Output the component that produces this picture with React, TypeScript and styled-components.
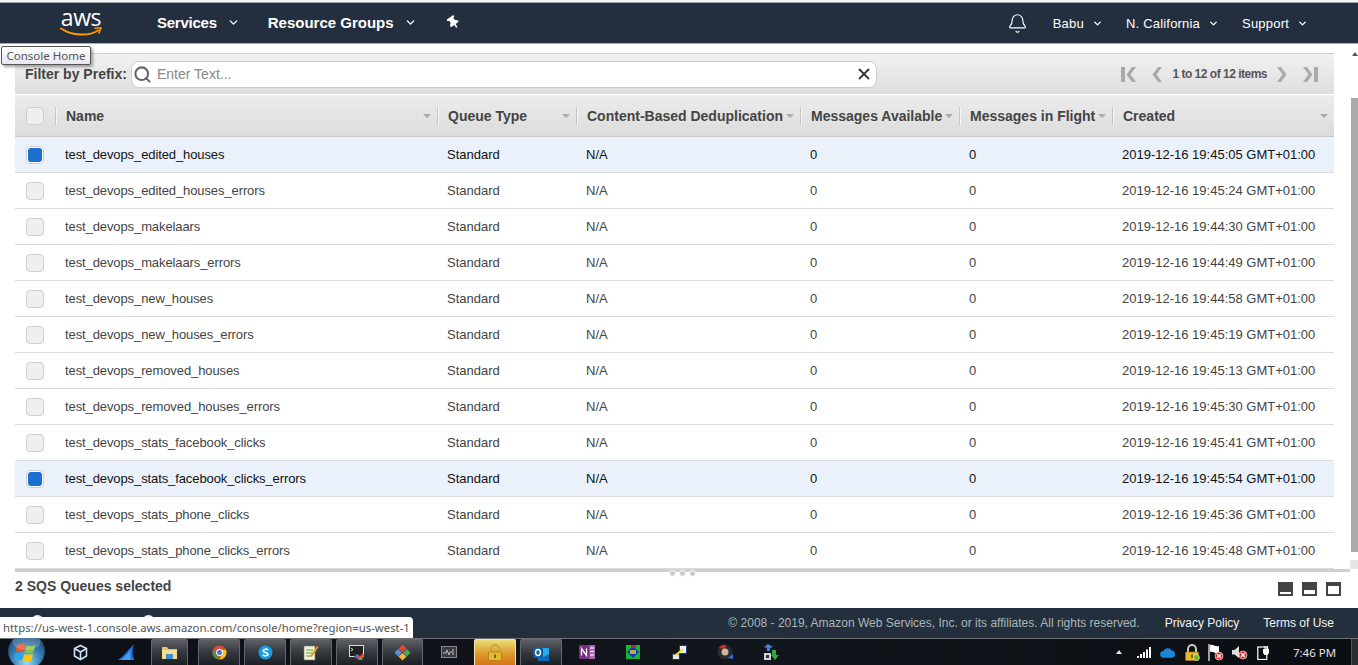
import * as React from 'react';
import styled, { createGlobalStyle } from 'styled-components';
import { Bell, ChevronDown, Search, X } from 'lucide-react';
import { FaThumbtack } from 'react-icons/fa';

const columns = '40px 382px 139px 224px 159px 153px 222px';

const queues = [
  { name: 'test_devops_edited_houses', created: '2019-12-16 19:45:05 GMT+01:00', selected: true },
  { name: 'test_devops_edited_houses_errors', created: '2019-12-16 19:45:24 GMT+01:00' },
  { name: 'test_devops_makelaars', created: '2019-12-16 19:44:30 GMT+01:00' },
  { name: 'test_devops_makelaars_errors', created: '2019-12-16 19:44:49 GMT+01:00' },
  { name: 'test_devops_new_houses', created: '2019-12-16 19:44:58 GMT+01:00' },
  { name: 'test_devops_new_houses_errors', created: '2019-12-16 19:45:19 GMT+01:00' },
  { name: 'test_devops_removed_houses', created: '2019-12-16 19:45:13 GMT+01:00' },
  { name: 'test_devops_removed_houses_errors', created: '2019-12-16 19:45:30 GMT+01:00' },
  { name: 'test_devops_stats_facebook_clicks', created: '2019-12-16 19:45:41 GMT+01:00' },
  { name: 'test_devops_stats_facebook_clicks_errors', created: '2019-12-16 19:45:54 GMT+01:00', selected: true },
  { name: 'test_devops_stats_phone_clicks', created: '2019-12-16 19:45:36 GMT+01:00' },
  { name: 'test_devops_stats_phone_clicks_errors', created: '2019-12-16 19:45:48 GMT+01:00' },
];

const headers = ['Name', 'Queue Type', 'Content-Based Deduplication', 'Messages Available', 'Messages in Flight', 'Created'];

const Global = createGlobalStyle`
  html, body {
    margin: 0;
    padding: 0;
    background: #fff;
    overflow: hidden;
    font-family: "Liberation Sans", Arial, sans-serif;
  }
`;

const Page = styled.div`
  width: 1358px;
  height: 665px;
  position: relative;
  overflow: hidden;
  display: flex;
  flex-direction: column;
`;

const TopEdge = styled.div`
  height: 2px;
  border-bottom: 1px solid #9aa0a6;
  background: #f4f4f4;
`;

const Nav = styled.div`
  height: 40px;
  flex: none;
  background: #232f3e;
  border-bottom: 1px solid #a8adb3;
  display: flex;
  align-items: center;
  color: #fff;
`;

const Logo = styled.div`
  width: 42px;
  margin-left: 60px;
  margin-right: 55px;
  display: flex;
  flex-direction: column;
  align-items: center;
  margin-top: -3px;
`;

const LogoText = styled.span`
  font-family: "Open Sans", sans-serif;
  font-size: 23px;
  line-height: 19px;
  letter-spacing: -0.4px;
  height: 19px;
`;

const MainItem = styled.span<{ $gap: number; $track?: number }>`
  font-size: 15px;
  font-weight: 700;
  display: flex;
  align-items: center;
  gap: 10px;
  margin-top: -2px;
  letter-spacing: ${p => p.$track || 0}px;
  margin-right: ${p => p.$gap}px;
`;

const UserItem = styled.span<{ $gap: number }>`
  font-size: 13px;
  letter-spacing: 0.2px;
  display: flex;
  align-items: center;
  gap: 8px;
  margin-right: ${p => p.$gap}px;
`;

const Spacer = styled.div`
  flex: 1;
`;

const BellWrap = styled.span`
  display: flex;
  margin-right: 25px;
`;

const PinWrap = styled.span`
  display: flex;
  margin-top: -2px;
  transform: rotate(-35deg);
`;

const Body = styled.div`
  flex: 1;
  display: flex;
  min-height: 0;
`;

const Content = styled.div`
  width: 1335px;
  margin-left: 15px;
  padding-top: 9px;
`;

const Panel = styled.div`
  width: 1319px;
`;

const Toolbar = styled.div`
  height: 40px;
  border-top: 1px solid #ccc;
  border-bottom: 1px solid #fff;
  background: linear-gradient(#f1f1f1, #dedede);
  display: flex;
  align-items: center;
  padding: 0 15px 0 10px;
`;

const FilterLabel = styled.label`
  font-size: 14px;
  font-weight: 700;
  color: #444;
  width: 106px;
  white-space: nowrap;
`;

const FilterBox = styled.div`
  width: 746px;
  height: 27px;
  box-sizing: border-box;
  background: #fff;
  border: 1px solid #ccc;
  border-radius: 8px;
  display: flex;
  align-items: center;
  padding: 0 3px 0 1px;
  color: #666;
`;

const Placeholder = styled.span`
  flex: 1;
  margin-left: 5px;
  font-size: 14px;
  color: #888;
`;

const Pager = styled.div`
  margin-left: auto;
  display: flex;
  align-items: center;
  color: #aaa;
`;

const PagerText = styled.span`
  font-size: 12px;
  font-weight: 700;
  color: #555;
  letter-spacing: -0.5px;
  margin: 0 9px;
`;

const PagerGap = styled.span<{ $width: number }>`
  width: ${p => p.$width}px;
`;

const HeaderRow = styled.div`
  height: 41px;
  display: grid;
  grid-template-columns: ${columns};
  align-items: center;
  background: linear-gradient(#ececec, #dcdcdc);
  border-bottom: 1px solid #c6c6c6;
`;

const HeaderCell = styled.div`
  height: 18px;
  border-left: 1px solid #c4c4c4;
  box-shadow: inset 1px 0 0 #f6f6f6;
  display: flex;
  align-items: center;
  justify-content: space-between;
  padding: 0 6px 0 10px;
  font-size: 14px;
  font-weight: 700;
  color: #444;
  white-space: nowrap;
`;

const Caret = styled.span`
  width: 0;
  height: 0;
  border-left: 4px solid transparent;
  border-right: 4px solid transparent;
  border-top: 4px solid #a8a8a8;
`;

const Row = styled.div<{ $selected?: boolean }>`
  height: 36px;
  box-sizing: border-box;
  display: grid;
  grid-template-columns: ${columns};
  align-items: center;
  background: ${p => (p.$selected ? '#eaf1fb' : '#fff')};
  border-bottom: 1px solid #dcdcdc;
  font-size: 13px;
  color: ${p => (p.$selected ? '#111' : '#444')};
`;

const Cell = styled.div`
  padding-left: 10px;
  white-space: nowrap;
`;

const NameCell = styled(Cell)`
  letter-spacing: -0.1px;
`;

const CheckCell = styled.div`
  padding-left: 11px;
  display: flex;
`;

const Check = styled.span<{ $on?: boolean }>`
  width: 18px;
  height: 18px;
  box-sizing: border-box;
  border-radius: 4px;
  border: 1px solid #cfcfcf;
  background: ${p => (p.$on ? '#fff' : '#efefef')};
  display: flex;
  align-items: center;
  justify-content: center;
  &::after {
    content: '';
    display: ${p => (p.$on ? 'block' : 'none')};
    width: 14px;
    height: 14px;
    border-radius: 3px;
    background: #1b6fd1;
  }
`;

const Divider = styled.div`
  height: 3px;
  background: #cfcfcf;
  display: flex;
  justify-content: center;
  gap: 3px;
`;

const Grip = styled.span`
  width: 5px;
  height: 5px;
  margin-top: 1px;
  border-radius: 50%;
  background: #ccc;
  border: 1px solid #fff;
  box-sizing: content-box;
`;

const StatusBar = styled.div`
  display: flex;
  align-items: center;
  height: 34px;
  font-size: 14px;
  font-weight: 700;
  color: #444;
  padding-bottom: 7px;
  box-sizing: border-box;
  padding-right: 9px;
`;

const PaneButtons = styled.div`
  margin-left: auto;
  display: flex;
  gap: 9px;
  margin-top: 7px;
`;

const PaneButton = styled.span<{ $bar: number }>`
  width: 15px;
  height: 14px;
  box-sizing: border-box;
  background: #444;
  padding: 0 2px 2px;
  display: flex;
  align-items: flex-end;
  &::after {
    content: '';
    flex: 1;
    height: ${p => p.$bar}px;
    background: #fff;
  }
`;

const ScrollTrack = styled.div`
  width: 8px;
  margin-left: auto;
  display: flex;
  flex-direction: column;
  align-items: center;
  padding-top: 8px;
`;

const ScrollUp = styled.span`
  width: 0;
  height: 0;
  border-left: 3px solid transparent;
  border-right: 3px solid transparent;
  border-bottom: 4px solid #555;
  margin-left: 2px;
`;

const ScrollThumb = styled.div`
  width: 7px;
  height: 454px;
  margin-top: 42px;
  background: #ababab;
`;

const ScrollEnd = styled.div`
  width: 8px;
  height: 9px;
  margin-top: 8px;
  background: #e6e6e6;
`;

const Footer = styled.div`
  height: 30px;
  flex: none;
  background: #242f3e;
  display: flex;
  align-items: center;
  font-size: 12px;
  padding-right: 24px;
  position: relative;
`;

const FooterCopy = styled.span`
  margin-left: auto;
  color: #aab7b8;
  margin-right: 25px;
`;

const FooterLink = styled.span`
  color: #f2f3f3;
  margin-right: 24px;
  &:last-child {
    margin-right: 0;
  }
`;

const FeedbackDot = styled.span<{ $x: number }>`
  position: absolute;
  top: 7px;
  left: ${p => p.$x}px;
  width: 13px;
  height: 13px;
  border-radius: 50%;
  background: #eee;
`;

const Taskbar = styled.div`
  height: 27px;
  flex: none;
  box-sizing: border-box;
  border-top: 1px solid #6b7075;
  background: linear-gradient(90deg, #0c1016, #11161c 55%, #0a0d12);
  display: flex;
  align-items: stretch;
  position: relative;
`;

const Orb = styled.div`
  position: absolute;
  left: 8px;
  top: -6px;
  width: 37px;
  height: 37px;
`;

const TaskApps = styled.div`
  margin-left: 59px;
  display: flex;
  align-items: stretch;
`;

const TaskSlot = styled.div<{ $width: number; $boxed?: boolean; $active?: boolean }>`
  width: ${p => p.$width}px;
  display: flex;
  align-items: center;
  justify-content: center;
  box-sizing: border-box;
  margin-right: ${p => (p.$boxed || p.$active ? 4 : 0)}px;
  border-radius: 2px 2px 0 0;
  border: ${p => (p.$boxed ? '1px solid #63686e' : p.$active ? '1px solid #f2e8b0' : '0')};
  border-bottom: 0;
  background: ${p =>
    p.$active
      ? 'linear-gradient(#e9dc78, #dd9a2c 55%, #d4751a)'
      : p.$boxed
        ? 'linear-gradient(#5c6064, #34373b 50%, #1c1f23)'
        : 'transparent'};
`;

const TaskGap = styled.div<{ $width: number }>`
  width: ${p => p.$width}px;
`;

const Tray = styled.div`
  margin-left: auto;
  display: flex;
  align-items: center;
  gap: 8px;
  color: #fff;
`;

const TrayArrow = styled.span`
  width: 0;
  height: 0;
  border-left: 3.5px solid transparent;
  border-right: 3.5px solid transparent;
  border-bottom: 4px solid #e8e8e8;
  margin-right: 6px;
`;

const TrayIcon = styled.span`
  width: 16px;
  display: flex;
  justify-content: center;
`;

const Clock = styled.span`
  font-family: "Open Sans", sans-serif;
  font-size: 11.5px;
  color: #eee;
  margin-left: 13px;
`;

const ShowDesktop = styled.span`
  width: 6px;
  align-self: stretch;
  margin-left: 7px;
  border-left: 1px solid #555;
  background: #2a2d30;
`;

const ConsoleTip = styled.div`
  position: absolute;
  left: 1px;
  top: 46px;
  width: 90px;
  height: 19px;
  box-sizing: border-box;
  background: linear-gradient(#fff, #e8e8f0);
  border: 1px solid #555;
  border-radius: 2px;
  box-shadow: 2px 2px 3px rgba(0, 0, 0, 0.35);
  font-family: "Noto Sans", sans-serif;
  font-size: 11.5px;
  line-height: 17px;
  text-align: center;
  color: #555;
`;

const UrlTip = styled.div`
  position: absolute;
  left: 0;
  top: 617px;
  width: 413px;
  height: 21px;
  box-sizing: border-box;
  background: #fff;
  border-radius: 0 4px 0 0;
  padding-left: 3px;
  font-family: "Noto Sans", sans-serif;
  font-size: 11.35px;
  line-height: 21px;
  color: #555;
  white-space: nowrap;
`;

const Pg = ({ d, w = 12 }: { d: string; w?: number }) => (
  <svg width={w} height="15" viewBox={`0 0 ${w} 15`} fill="currentColor">
    <path d={d} />
  </svg>
);

const AwsSmile = () => (
  <svg width="42" height="9" viewBox="0 0 42 9" fill="none">
    <path d="M1 1.5C12 9 29 9.5 38 3.5" stroke="#f90" strokeWidth="2" strokeLinecap="round" />
    <path d="M35 1.2L41 0.8L39 6" stroke="#f90" strokeWidth="1.6" strokeLinecap="round" strokeLinejoin="round" />
  </svg>
);

const WinOrb = () => (
  <svg width="37" height="37" viewBox="0 0 37 37">
    <defs>
      <radialGradient id="orb" cx="50%" cy="80%" r="75%">
        <stop offset="0" stopColor="#9be0f5" />
        <stop offset="0.5" stopColor="#3a86bd" />
        <stop offset="1" stopColor="#1a4a78" />
      </radialGradient>
    </defs>
    <circle cx="18.5" cy="18.5" r="18" fill="url(#orb)" stroke="#2c4a68" />
    <path d="M9 12c3-1.500 6.500-1 8.500 0l-1.500 7c-2-1-5.500-1.500-8.500 0z" fill="#e8542c" />
    <path d="M18.500 12.500c2.500 1 5.500 1 8.500-.5l-1.500 7c-3 1.500-6 1-8.500.2z" fill="#8cc63f" />
    <path d="M7 20.500c3-1.500 5.500-1 8.500 0l-1.500 7c-2.500-1-5.500-1.500-8.500 0z" fill="#2fa3e6" />
    <path d="M16.500 21c2.500 1 5.500 1 8.500-.5l-1.500 7c-3 1.500-6 1-8.500.2z" fill="#ffc20e" />
    <ellipse cx="18.500" cy="9" rx="14" ry="8" fill="#fff" opacity="0.2" />
  </svg>
);

const VBoxIcon = () => (
  <svg width="15" height="17" viewBox="0 0 15 17" fill="none" stroke="#cfe0f2" strokeWidth="1.6">
    <path d="M7.500 1.500L13.500 4.500V12L7.500 15.500L1.500 12V4.500z" />
    <path d="M1.500 4.500L7.500 8L13.500 4.500M7.500 8V15.500" />
  </svg>
);

const FinIcon = () => (
  <svg width="17" height="16" viewBox="0 0 17 16">
    <path d="M0 16C6 12 10 6 16 0C14 5 14 11 16.500 16z" fill="#1f6fd6" />
    <path d="M3 16C7 13 10 9 13 6C12 10 12 13 13 16z" fill="#4a9bf0" />
  </svg>
);

const FolderIcon = () => (
  <svg width="17" height="15" viewBox="0 0 17 15">
    <path d="M1 2h5l1.500 2H16v10H1z" fill="#e8c766" />
    <rect x="1" y="5" width="15" height="9" fill="#f5dd92" />
    <rect x="5" y="9" width="7" height="5" fill="#3f8fc9" />
  </svg>
);

const ChromeIcon = () => (
  <svg width="15" height="15" viewBox="0 0 15 15">
    <circle cx="7.500" cy="7.500" r="7" fill="#dd4b39" />
    <path d="M1.500 4L4.500 11L7.500 14.500A7 7 0 0 1 1.500 4z" fill="#2ea44f" />
    <path d="M7.500 5H14A7 7 0 0 1 7.500 14.500L10 9z" fill="#f5c518" />
    <circle cx="7.500" cy="7.500" r="3.400" fill="#fff" />
    <circle cx="7.500" cy="7.500" r="2.500" fill="#3b78e7" />
  </svg>
);

const SkypeIcon = () => (
  <svg width="15" height="15" viewBox="0 0 15 15">
    <circle cx="7.500" cy="7.500" r="7" fill="#1e9be0" />
    <path d="M10 5C9 3.800 5.500 3.800 5.200 5.800C5 8 10 7 10 9.300C9.800 11.200 6 11.300 4.800 9.800" fill="none" stroke="#fff" strokeWidth="1.600" />
  </svg>
);

const NotepadIcon = () => (
  <svg width="16" height="17" viewBox="0 0 16 17">
    <rect x="1" y="2" width="11" height="14" fill="#f4f1d8" stroke="#777" strokeWidth="0.6" />
    <path d="M3 6h7M3 9h7M3 12h5" stroke="#6a9a3a" strokeWidth="1" />
    <path d="M7 12L14 2l1.500 1L9 13z" fill="#d9a21f" />
    <path d="M14 2l1.500 1 .5-1.500z" fill="#c0392b" />
  </svg>
);

const TermIcon = () => (
  <svg width="16" height="16" viewBox="0 0 16 16">
    <rect x="0.500" y="0.500" width="14" height="11" fill="#222" stroke="#ddd" />
    <path d="M2 3l2 1.500L2 6" stroke="#fff" fill="none" strokeWidth="0.800" />
    <path d="M5 12l3-3 3 2 3-3 1 3-4 4z" fill="#e0413c" />
    <path d="M9 15l2-3 3 0-1 3z" fill="#43b649" />
    <path d="M5 12l3-3 1 3z" fill="#2f7fd6" />
  </svg>
);

const GitIcon = () => (
  <svg width="17" height="17" viewBox="0 0 17 17">
    <path d="M8.500 0.500L12.500 4.500L8.500 8.500L4.500 4.500z" fill="#d9483b" />
    <path d="M4 5L8 8.500L4 12.500L0.500 8.500z" fill="#5b8fd9" />
    <path d="M13 5L16.500 8.500L13 12.500L9 8.500z" fill="#4aa84f" />
    <path d="M8.500 9L12.500 12.500L8.500 16.500L4.500 12.500z" fill="#f4b63f" />
  </svg>
);

const ConsoleIcon = () => (
  <svg width="16" height="12" viewBox="0 0 16 12">
    <rect x="0.500" y="0.500" width="15" height="11" fill="#3a3d40" stroke="#888" />
    <path d="M2 7h3l1-3 2 5 1-3h2M12 3v6" stroke="#bbb" fill="none" strokeWidth="1" />
  </svg>
);

const LockIcon = ({ badge }: { badge?: boolean }) => (
  <svg width="16" height="17" viewBox="0 0 16 17">
    <path d="M4 8V5a4 4 0 0 1 8 0v3" fill="none" stroke={badge ? '#c8c8c8' : '#c9a83a'} strokeWidth="2" />
    <rect x="1.500" y="8" width="13" height="8.500" rx="1" fill="#e8b92f" stroke="#a07c15" strokeWidth="0.700" />
    <rect x="7" y="10.500" width="2" height="3.500" fill="#7a5c10" />
    {badge && <circle cx="12.500" cy="13.500" r="3" fill="#6fb52c" stroke="#fff" strokeWidth="0.500" />}
  </svg>
);

const OutlookIcon = () => (
  <svg width="16" height="16" viewBox="0 0 16 16">
    <rect x="5" y="3" width="11" height="11" fill="#28a8ea" />
    <path d="M5 9l5.500 3L16 9v7H5z" fill="#0f6cbd" />
    <rect x="0" y="2" width="10" height="11" rx="1" fill="#0a5fa8" />
    <ellipse cx="5" cy="7.500" rx="2.400" ry="3" fill="none" stroke="#fff" strokeWidth="1.400" />
  </svg>
);

const OneNoteIcon = () => (
  <svg width="16" height="16" viewBox="0 0 16 16">
    <rect x="7" y="1" width="9" height="14" fill="#a66bb0" />
    <path d="M11 4h4M11 7.500h4M11 11h4" stroke="#fff" strokeWidth="1.200" />
    <rect x="0" y="1" width="10.500" height="14" rx="1" fill="#7b2e83" />
    <path d="M2.500 11.500V4.500L7.500 11.500V4.500" stroke="#fff" strokeWidth="1.300" fill="none" />
  </svg>
);

const SyncIcon = () => (
  <svg width="14" height="14" viewBox="0 0 14 14">
    <rect width="14" height="14" fill="#16b534" />
    <path d="M7 1L1 7l6 6 6-6z" fill="#1432c8" />
    <path d="M5 0h5v3H5z" fill="#c8201c" />
    <path d="M4 6h6M4 8h6" stroke="#f2d21a" strokeWidth="1.300" />
  </svg>
);

const PlugIcon = () => (
  <svg width="15" height="15" viewBox="0 0 15 15">
    <rect x="7.500" y="0.500" width="7" height="8" fill="#e8eef6" stroke="#1f3a8a" />
    <rect x="0.500" y="9" width="7" height="5.500" fill="#e8e8e8" stroke="#333" />
    <path d="M4 10L11 4" stroke="#f4e01f" strokeWidth="2" />
  </svg>
);

const DiscIcon = () => (
  <svg width="17" height="17" viewBox="0 0 17 17">
    <circle cx="8" cy="8" r="7.500" fill="#2b2b2b" />
    <path d="M2 4A7 7 0 0 1 9 1L8 5z" fill="#d22c2c" />
    <circle cx="8" cy="8" r="3.500" fill="#c7b9a0" />
    <path d="M11 14l5-4v5z" fill="#2f6fd9" />
  </svg>
);

const NetLockIcon = () => (
  <svg width="17" height="17" viewBox="0 0 17 17">
    <path d="M1 3l4-3 5 3-3 1v3H4V4z" fill="#3f80d8" />
    <rect x="1" y="9" width="7" height="7" fill="#cfd4da" />
    <rect x="3" y="11" width="3" height="3" fill="#333" />
    <path d="M9 6h4v5h3l-4 5-4-5h1z" fill="#2faa3e" />
  </svg>
);

const SignalIcon = () => (
  <svg width="14" height="11" viewBox="0 0 14 11" fill="#fff">
    <rect x="0" y="9" width="2" height="2" />
    <rect x="3" y="7" width="2" height="4" />
    <rect x="6" y="5" width="2" height="6" />
    <rect x="9" y="2.500" width="2" height="8.500" />
    <rect x="12" y="0" width="2" height="11" />
  </svg>
);

const CloudIcon = () => (
  <svg width="17" height="11" viewBox="0 0 17 11">
    <path d="M4 11a3.500 3.500 0 0 1-.5-7A5 5 0 0 1 12.500 3.500a3.800 3.800 0 0 1 .5 7.500z" fill="#1a86d8" />
  </svg>
);

const NoBadge = ({ x, y }: { x: number; y: number }) => (
  <g transform={`translate(${x} ${y})`}>
    <circle r="4" fill="#e3262e" stroke="#fff" strokeWidth="0.600" />
    <path d="M-2-2L2 2M2-2L-2 2" stroke="#fff" strokeWidth="1.200" />
  </g>
);

const FlagIcon = () => (
  <svg width="16" height="17" viewBox="0 0 16 17">
    <path d="M1 0v17" stroke="#fff" strokeWidth="1.200" />
    <path d="M2 1c3-1 5 2 9 1v7c-4 1-6-2-9-1z" fill="#fff" />
    <NoBadge x={11} y={12} />
  </svg>
);

const SoundIcon = () => (
  <svg width="16" height="15" viewBox="0 0 16 15">
    <path d="M0 5h2.500L7 1v12L2.500 9.500H0z" fill="#ddd" />
    <NoBadge x={11} y={10} />
  </svg>
);

const PowerIcon = () => (
  <svg width="14" height="15" viewBox="0 0 14 15">
    <rect x="0.800" y="2" width="9" height="12.500" fill="none" stroke="#fff" strokeWidth="1.200" />
    <path d="M6 4h6v4l-1.500 2h-3L6 8z" fill="#fff" />
    <path d="M8 1v3M10.500 1v3" stroke="#fff" strokeWidth="1.200" />
  </svg>
);

export default function App() {
  return (
    <Page>
      <Global />
      <TopEdge />
      <Nav>
        <Logo>
          <LogoText>aws</LogoText>
          <AwsSmile />
        </Logo>
        <MainItem $gap={28} $track={-0.25}>
          Services <ChevronDown size={13} strokeWidth={2.5} />
        </MainItem>
        <MainItem $gap={30}>
          Resource Groups <ChevronDown size={13} strokeWidth={2.5} />
        </MainItem>
        <PinWrap>
          <FaThumbtack size={13} />
        </PinWrap>
        <Spacer />
        <BellWrap>
          <Bell size={21} strokeWidth={1.3} />
        </BellWrap>
        <UserItem $gap={23}>
          Babu <ChevronDown size={11} strokeWidth={3} />
        </UserItem>
        <UserItem $gap={23}>
          N. California <ChevronDown size={11} strokeWidth={3} />
        </UserItem>
        <UserItem $gap={50}>
          Support <ChevronDown size={11} strokeWidth={3} />
        </UserItem>
      </Nav>
      <Body>
        <Content>
          <Panel>
            <Toolbar>
              <FilterLabel>Filter by Prefix:</FilterLabel>
              <FilterBox>
                <Search size={19} strokeWidth={2.6} />
                <Placeholder>Enter Text...</Placeholder>
                <X size={18} strokeWidth={2.4} color="#333" />
              </FilterBox>
              <Pager>
                <Pg w={16} d="M0 0h4v15H0zM11 0h4L9.500 7.500 15 15h-4L5.500 7.500z" />
                <PagerGap $width={14} />
                <Pg d="M7 0h4L5.500 7.500 11 15H7L1.500 7.500z" />
                <PagerText>1 to 12 of 12 items</PagerText>
                <Pg d="M1 0h4l5.500 7.500L5 15H1l5.500-7.500z" />
                <PagerGap $width={15} />
                <Pg w={16} d="M11 0h4v15h-4zM0 0h4l5.500 7.500L4 15H0l5.500-7.500z" />
              </Pager>
            </Toolbar>
            <HeaderRow>
              <CheckCell>
                <Check />
              </CheckCell>
              {headers.map(h => (
                <HeaderCell key={h}>
                  {h}
                  <Caret />
                </HeaderCell>
              ))}
            </HeaderRow>
            {queues.map(q => (
              <Row key={q.name} $selected={q.selected}>
                <CheckCell>
                  <Check $on={q.selected} />
                </CheckCell>
                <NameCell>{q.name}</NameCell>
                <Cell>Standard</Cell>
                <Cell>N/A</Cell>
                <Cell>0</Cell>
                <Cell>0</Cell>
                <Cell>{q.created}</Cell>
              </Row>
            ))}
          </Panel>
          <Divider>
            <Grip />
            <Grip />
            <Grip />
          </Divider>
          <StatusBar>
            2 SQS Queues selected
            <PaneButtons>
              <PaneButton $bar={2} />
              <PaneButton $bar={4} />
              <PaneButton $bar={8} />
            </PaneButtons>
          </StatusBar>
        </Content>
        <ScrollTrack>
          <ScrollUp />
          <ScrollThumb />
          <ScrollEnd />
        </ScrollTrack>
      </Body>
      <Footer>
        <FeedbackDot $x={31} />
        <FeedbackDot $x={142} />
        <FooterCopy>© 2008 - 2019, Amazon Web Services, Inc. or its affiliates. All rights reserved.</FooterCopy>
        <FooterLink>Privacy Policy</FooterLink>
        <FooterLink>Terms of Use</FooterLink>
      </Footer>
      <Taskbar>
        <Orb>
          <WinOrb />
        </Orb>
        <TaskApps>
          <TaskSlot $width={42}><VBoxIcon /></TaskSlot>
          <TaskSlot $width={50}><FinIcon /></TaskSlot>
          <TaskSlot $width={37} $boxed><FolderIcon /></TaskSlot>
          <TaskGap $width={6} />
          <TaskSlot $width={42} $boxed><ChromeIcon /></TaskSlot>
          <TaskSlot $width={42} $boxed><SkypeIcon /></TaskSlot>
          <TaskSlot $width={42} $boxed><NotepadIcon /></TaskSlot>
          <TaskSlot $width={42} $boxed><TermIcon /></TaskSlot>
          <TaskSlot $width={41} $boxed><GitIcon /></TaskSlot>
          <TaskGap $width={1} />
          <TaskSlot $width={42}><ConsoleIcon /></TaskSlot>
          <TaskGap $width={4} />
          <TaskSlot $width={42} $active><LockIcon /></TaskSlot>
          <TaskSlot $width={42} $boxed><OutlookIcon /></TaskSlot>
          <TaskSlot $width={42}><OneNoteIcon /></TaskSlot>
          <TaskSlot $width={50}><SyncIcon /></TaskSlot>
          <TaskSlot $width={42}><PlugIcon /></TaskSlot>
          <TaskSlot $width={50}><DiscIcon /></TaskSlot>
          <TaskSlot $width={42}><NetLockIcon /></TaskSlot>
        </TaskApps>
        <Tray>
          <TrayArrow />
          <TrayIcon><SignalIcon /></TrayIcon>
          <TrayIcon><CloudIcon /></TrayIcon>
          <TrayIcon><LockIcon badge /></TrayIcon>
          <TrayIcon><FlagIcon /></TrayIcon>
          <TrayIcon><SoundIcon /></TrayIcon>
          <TrayIcon><PowerIcon /></TrayIcon>
          <Clock>7:46 PM</Clock>
          <ShowDesktop />
        </Tray>
      </Taskbar>
      <ConsoleTip>Console Home</ConsoleTip>
      <UrlTip>https://us-west-1.console.aws.amazon.com/console/home?region=us-west-1</UrlTip>
    </Page>
  );
}
